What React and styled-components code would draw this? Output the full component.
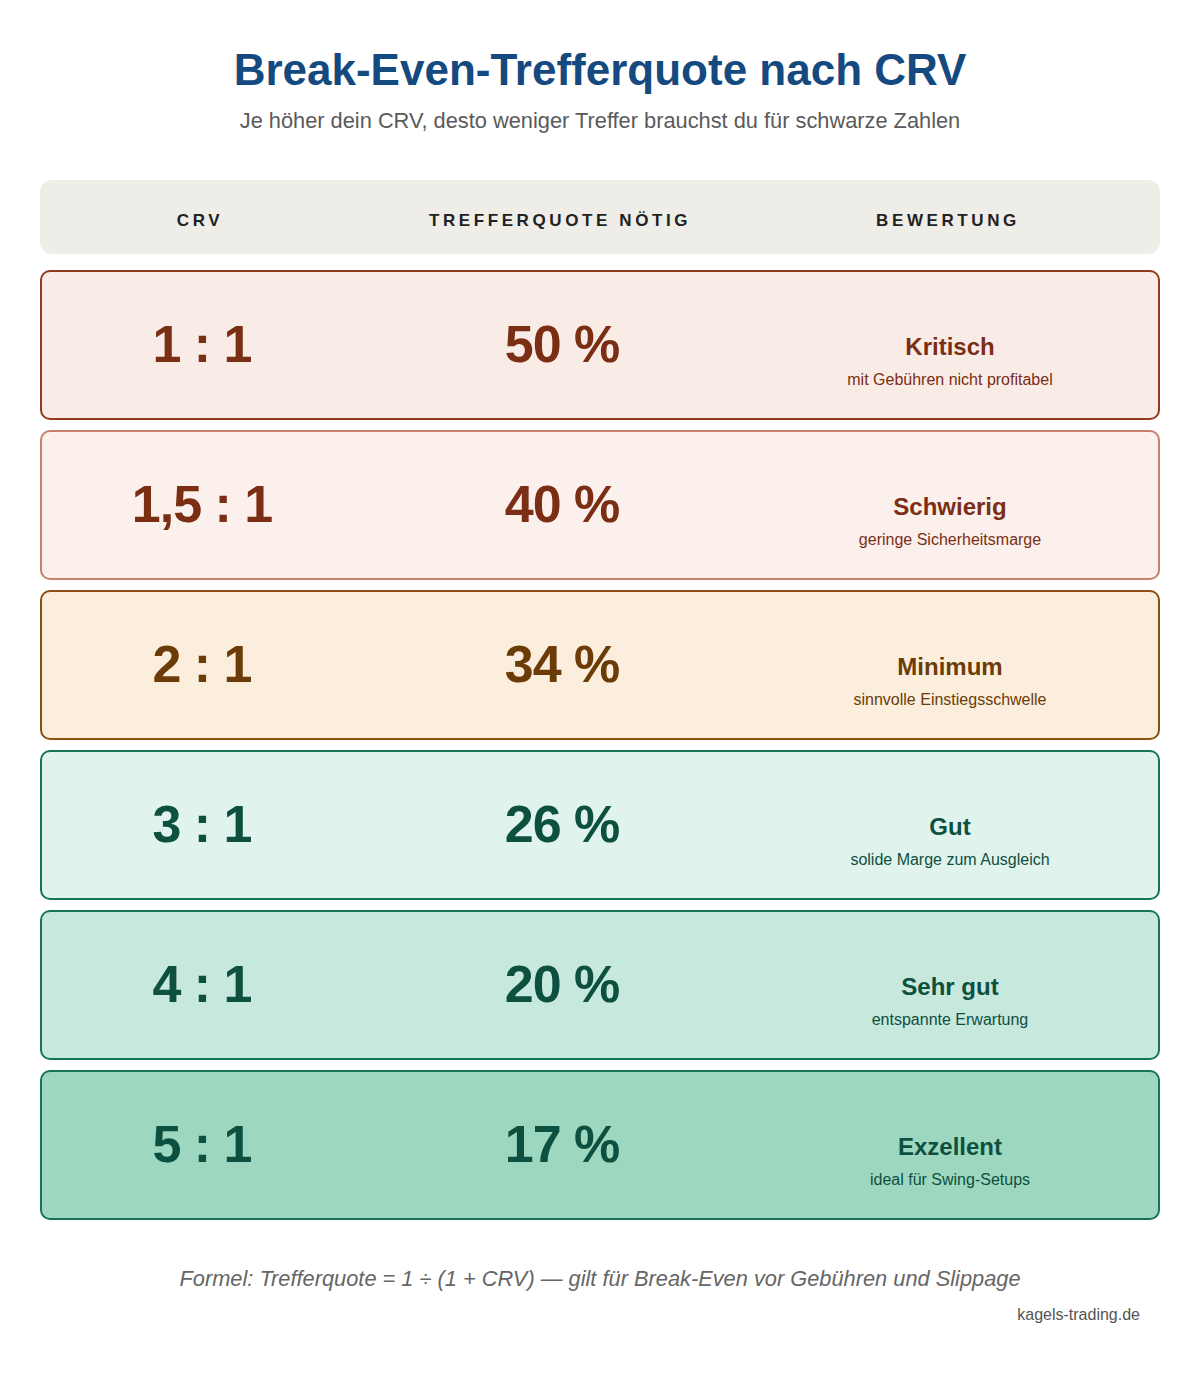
import React from "react";
import styled, { createGlobalStyle } from "styled-components";

const GlobalStyle = createGlobalStyle`
  body {
    margin: 0;
    background: #fff;
    font-family: "Liberation Sans", Arial, sans-serif;
  }
`;

const Page = styled.div`
  width: 1120px;
  padding: 44px 40px 40px;
`;

const Title = styled.h1`
  margin: 0;
  text-align: center;
  font-size: 44px;
  line-height: 52px;
  font-weight: 700;
  color: #154a80;
`;

const Subtitle = styled.p`
  margin: 12px 0 0;
  text-align: center;
  font-size: 21.8px;
  line-height: 26px;
  color: #5a5a5a;
`;

const HeaderRow = styled.div`
  display: grid;
  grid-template-columns: 320px 400px 376px;
  align-items: center;
  height: 74px;
  margin-top: 46px;
  background: #efede8;
  border-radius: 12px;
`;

const HeaderCell = styled.div`
  text-align: center;
  font-size: 17px;
  font-weight: 700;
  letter-spacing: 3.6px;
  color: #222;
  margin-top: 8px;
`;

const Rows = styled.div`
  display: flex;
  flex-direction: column;
  gap: 10px;
  margin-top: 16px;
`;

const Row = styled.div`
  display: grid;
  grid-template-columns: 320px 400px 376px;
  align-items: center;
  box-sizing: border-box;
  height: 150px;
  border: 2px solid ${(p) => p.$border};
  border-radius: 10px;
  background: ${(p) => p.$bg};
  color: ${(p) => p.$fg};
`;

const BigValue = styled.div`
  text-align: center;
  font-size: 52px;
  font-weight: 700;
  letter-spacing: -1px;
  line-height: 1;
  margin-top: -2px;
`;

const Rating = styled.div`
  display: flex;
  flex-direction: column;
  align-items: center;
  margin-top: 31px;
`;

const RatingTitle = styled.div`
  font-size: 24px;
  font-weight: 700;
  line-height: 28px;
`;

const RatingNote = styled.div`
  margin-top: 10px;
  font-size: 16px;
  line-height: 18px;
`;

const Formula = styled.p`
  margin: 46px 0 0;
  text-align: center;
  font-size: 21.8px;
  font-style: italic;
  line-height: 26px;
  color: #666;
`;

const Source = styled.div`
  margin-top: 14px;
  padding-right: 20px;
  text-align: right;
  font-size: 16px;
  color: #555;
`;

const rows = [
  { crv: "1 : 1", quote: "50 %", title: "Kritisch", note: "mit Gebühren nicht profitabel", bg: "#f9ece6", border: "#8f3a1c", fg: "#7a2e14" },
  { crv: "1,5 : 1", quote: "40 %", title: "Schwierig", note: "geringe Sicherheitsmarge", bg: "#fbf0ec", border: "#c4826c", fg: "#7a2e14" },
  { crv: "2 : 1", quote: "34 %", title: "Minimum", note: "sinnvolle Einstiegsschwelle", bg: "#fbeedd", border: "#8a5014", fg: "#6b3c08" },
  { crv: "3 : 1", quote: "26 %", title: "Gut", note: "solide Marge zum Ausgleich", bg: "#e0f3ec", border: "#17735a", fg: "#0d5040" },
  { crv: "4 : 1", quote: "20 %", title: "Sehr gut", note: "entspannte Erwartung", bg: "#c7e8dc", border: "#17735a", fg: "#0d5040" },
  { crv: "5 : 1", quote: "17 %", title: "Exzellent", note: "ideal für Swing-Setups", bg: "#9dd7bf", border: "#17735a", fg: "#0d5040" },
];

export default function App() {
  return (
    <>
      <GlobalStyle />
      <Page>
        <Title>Break-Even-Trefferquote nach CRV</Title>
        <Subtitle>Je höher dein CRV, desto weniger Treffer brauchst du für schwarze Zahlen</Subtitle>
        <HeaderRow>
          <HeaderCell>CRV</HeaderCell>
          <HeaderCell>TREFFERQUOTE NÖTIG</HeaderCell>
          <HeaderCell>BEWERTUNG</HeaderCell>
        </HeaderRow>
        <Rows>
          {rows.map((r) => (
            <Row key={r.crv} $bg={r.bg} $border={r.border} $fg={r.fg}>
              <BigValue>{r.crv}</BigValue>
              <BigValue>{r.quote}</BigValue>
              <Rating>
                <RatingTitle>{r.title}</RatingTitle>
                <RatingNote>{r.note}</RatingNote>
              </Rating>
            </Row>
          ))}
        </Rows>
        <Formula>Formel: Trefferquote = 1 ÷ (1 + CRV) — gilt für Break-Even vor Gebühren und Slippage</Formula>
        <Source>kagels-trading.de</Source>
      </Page>
    </>
  );
}
